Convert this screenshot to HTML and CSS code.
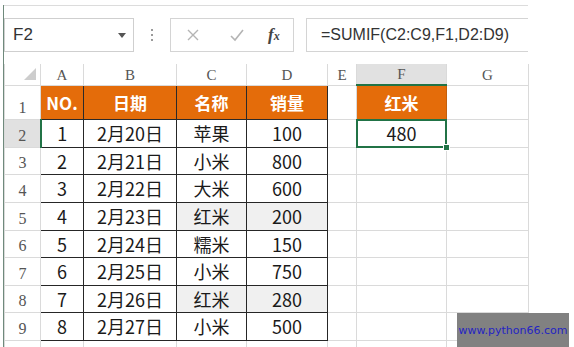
FILE: index.html
```html
<!DOCTYPE html>
<html lang="zh">
<head>
  <meta charset="UTF-8">
  <title>SUMIF</title>
  <link rel="stylesheet" href="styles.css">
</head>
<body>
  <div class="app">
    <div class="fbar">
      <div class="namebox">
        <span>F2</span>
        <span class="caret"></span>
      </div>
      <div class="grip"><i></i><i></i><i></i></div>
      <div class="btns">
        <svg class="ico" width="14" height="14" viewBox="0 0 14 14"><path d="M2 2 L12 12 M12 2 L2 12" stroke="#b4b4b4" stroke-width="1.4" fill="none"/></svg>
        <svg class="ico" width="16" height="14" viewBox="0 0 16 14"><path d="M2 8 L6 12 L14 2" stroke="#b4b4b4" stroke-width="1.6" fill="none"/></svg>
        <span class="fx"><i>f</i><i class="x">x</i></span>
      </div>
      <div class="formula">=SUMIF(C2:C9,F1,D2:D9)</div>
    </div>

    <table class="grid">
      <colgroup>
        <col class="c-hd"><col class="c-a"><col class="c-b"><col class="c-c"><col class="c-d"><col class="c-e"><col class="c-f"><col class="c-g">
      </colgroup>
      <tr class="colhd">
        <th class="corner"><span class="tri"></span></th>
        <th>A</th><th>B</th><th>C</th><th>D</th><th>E</th><th class="on">F</th><th>G</th>
      </tr>
      <tr class="r1">
        <th class="rowhd">1</th>
        <td class="hd">NO.</td><td class="hd">日期</td><td class="hd">名称</td><td class="hd">销量</td>
        <td></td><td class="hd solo">红米</td><td></td>
      </tr>
      <tr class="r2">
        <th class="rowhd on">2</th>
        <td class="d">1</td><td class="d">2月20日</td><td class="d">苹果</td><td class="d">100</td>
        <td></td><td class="sel">480</td><td></td>
      </tr>
      <tr class="r3">
        <th class="rowhd">3</th>
        <td class="d">2</td><td class="d">2月21日</td><td class="d">小米</td><td class="d">800</td>
        <td></td><td></td><td></td>
      </tr>
      <tr class="r4">
        <th class="rowhd">4</th>
        <td class="d">3</td><td class="d">2月22日</td><td class="d">大米</td><td class="d">600</td>
        <td></td><td></td><td></td>
      </tr>
      <tr class="r5">
        <th class="rowhd">5</th>
        <td class="d">4</td><td class="d">2月23日</td><td class="d hit">红米</td><td class="d hit">200</td>
        <td></td><td></td><td></td>
      </tr>
      <tr class="r6">
        <th class="rowhd">6</th>
        <td class="d">5</td><td class="d">2月24日</td><td class="d">糯米</td><td class="d">150</td>
        <td></td><td></td><td></td>
      </tr>
      <tr class="r7">
        <th class="rowhd">7</th>
        <td class="d">6</td><td class="d">2月25日</td><td class="d">小米</td><td class="d">750</td>
        <td></td><td></td><td></td>
      </tr>
      <tr class="r8">
        <th class="rowhd">8</th>
        <td class="d">7</td><td class="d">2月26日</td><td class="d hit">红米</td><td class="d hit">280</td>
        <td></td><td></td><td></td>
      </tr>
      <tr class="r9">
        <th class="rowhd">9</th>
        <td class="d">8</td><td class="d">2月27日</td><td class="d">小米</td><td class="d">500</td>
        <td></td><td></td><td></td>
      </tr>
      <tr class="r10">
        <th class="rowhd"></th>
        <td></td><td></td><td></td><td></td><td></td><td></td><td></td>
      </tr>
    </table>

    <div class="mark">www.python66.com</div>
  </div>
</body>
</html>
```

FILE: styles.css
```css
html, body { margin: 0; padding: 0; background: #fff; }
body { width: 574px; height: 347px; overflow: hidden; font-family: "Noto Sans CJK SC", sans-serif; color: #1a1a1a; }

.app { position: relative; margin-left: 3px; width: 524px; height: 347px; border-left: 1px solid #6f8a7c; }

/* formula bar */
.fbar { display: flex; align-items: center; margin-top: 5px; border-top: 1px solid #dcdcdc; padding: 12px 0; }
.namebox { box-sizing: border-box; width: 130px; height: 34px; border: 1px solid #cfcfcf; display: flex; align-items: center; justify-content: space-between; padding: 0 7px 0 8px; font-family: "Liberation Sans", sans-serif; font-size: 17px; color: #333; }
.caret { width: 0; height: 0; border-left: 4px solid transparent; border-right: 4px solid transparent; border-top: 5px solid #555; }
.grip { width: 36px; display: flex; flex-direction: column; align-items: center; gap: 3px; }
.grip i { width: 2px; height: 2px; background: #9a9a9a; }
.btns { box-sizing: border-box; width: 124px; height: 34px; border: 1px solid #d4d4d4; display: flex; align-items: center; padding: 0 10px 0 15px; }
.btns .ico { display: block; }
.btns .ico:first-child { margin-right: 29px; }
.fx { margin-left: 23px; font-family: "Liberation Serif", serif; color: #444; font-size: 17px; font-weight: bold; font-style: italic; }
.fx i { font-style: italic; }
.fx .x { font-size: 12px; }
.formula { box-sizing: border-box; margin-left: 12px; flex: 1; height: 34px; border: 1px solid #d4d4d4; border-right: 0; padding-left: 14px; display: flex; align-items: center; font-family: "Liberation Sans", sans-serif; font-size: 16px; color: #333; }

/* sheet */
.grid { border-collapse: collapse; table-layout: fixed; width: 524px; }
.c-hd { width: 36px; }
.c-a { width: 43px; }
.c-b { width: 93px; }
.c-c { width: 70px; }
.c-d { width: 81px; }
.c-e { width: 29px; }
.c-f { width: 90px; }
.c-g { width: 82px; }

.grid th, .grid td { border: 1px solid #dadada; padding: 0; text-align: center; white-space: nowrap; overflow: hidden; }
.grid th { font-family: "Liberation Serif", serif; font-weight: normal; color: #555; font-size: 15px; }
.grid td { font-size: 18px; }

.colhd { height: 21px; }
.colhd th { border-top: 0; vertical-align: bottom; line-height: 19px; }
.colhd th.on { background: #e1e1e1; border-bottom: 2px solid #217346; }
.corner { position: relative; }
.tri { position: absolute; right: 4px; bottom: 5px; width: 0; height: 0; border-left: 12px solid transparent; border-bottom: 12px solid #cdcdcd; }

.rowhd { vertical-align: bottom; line-height: 22px; border-left: 0; }
.grid .rowhd { font-size: 16px; }
.rowhd.on { background: #e1e1e1; border-right: 2px solid #217346; }

.r1 { height: 34px; }
.r2, .r4, .r5, .r7, .r9 { height: 28px; }
.r3, .r6, .r8 { height: 27px; }
.r10 { height: 10px; }
.r10 th, .r10 td { border-bottom: 0; }

.grid td.hd { background: #e46c0a; color: #fff; font-weight: bold; font-size: 17px; border: 1px solid #2a2a2a; }
.grid td.hd.solo { border: 1px solid #c3600e; }
.grid td.d { border: 1px solid #262626; line-height: 20px; }
.grid td.hit { background: #f0f0f0; }

.grid td.sel { position: relative; overflow: visible; }
.sel::after { content: ""; position: absolute; left: -1px; top: -1px; right: -1px; bottom: -1px; border: 2px solid #217346; }
.sel::before { content: ""; position: absolute; right: -4px; bottom: -4px; width: 5px; height: 5px; background: #217346; border: 1px solid #fff; z-index: 1; }

.mark { position: absolute; left: 453px; top: 308px; width: 112px; height: 34px; background: #818181; display: flex; align-items: center; justify-content: center; font-family: "DejaVu Sans", sans-serif; font-size: 11px; color: #2424c4; }
```
